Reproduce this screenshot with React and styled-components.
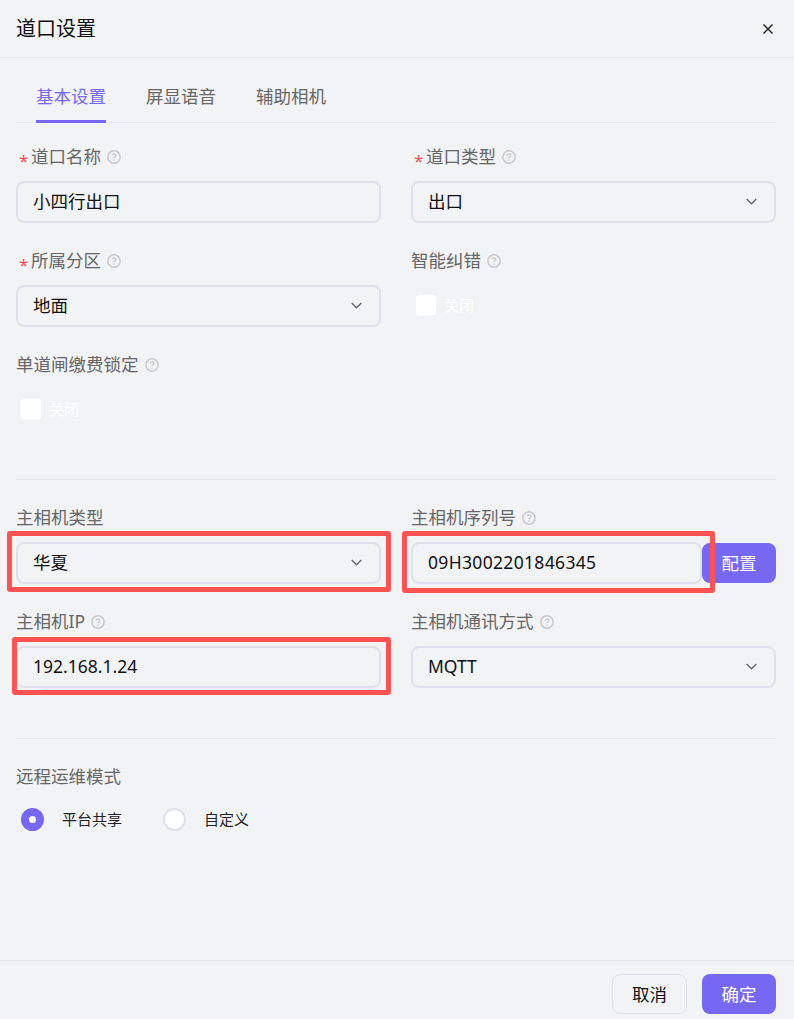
import React from 'react';
import styled, { createGlobalStyle } from 'styled-components';

const FONT = '"Noto Sans", "Noto Sans CJK SC", sans-serif';
const PURPLE = '#7768f3';
const LINE = '#e5e6eb';
const BORDER = '#dfe0e8';

const GlobalStyle = createGlobalStyle`
  html, body {
    margin: 0;
    padding: 0;
    background: #f2f3f5;
  }
  body {
    font-family: ${FONT};
  }
`;

const Dialog = styled.div`
  width: 794px;
  height: 1019px;
  display: flex;
  flex-direction: column;
  background: #f2f3f5;
  overflow: hidden;
`;

const Header = styled.header`
  height: 57px;
  flex: none;
  box-sizing: content-box;
  padding: 0 21px 0 16px;
  display: flex;
  align-items: center;
  justify-content: space-between;
  border-bottom: 1px solid ${LINE};
`;

const Title = styled.h1`
  margin: 0;
  font-size: 20px;
  font-weight: 400;
  line-height: 57px;
  color: #111;
`;

const CloseButton = styled.button`
  width: 10px;
  height: 10px;
  padding: 0;
  border: 0;
  background: none;
  display: flex;
  color: #1a1a1a;
`;

const Body = styled.main`
  flex: 1;
  min-height: 0;
  padding: 0 18px 0 16px;
  display: flex;
  flex-direction: column;
`;

const Tabs = styled.nav`
  height: 64px;
  flex: none;
  margin-bottom: 22px;
  padding-left: 20px;
  display: flex;
  gap: 40px;
  border-bottom: 1px solid ${LINE};
`;

const Tab = styled.div`
  height: 65px;
  box-sizing: border-box;
  padding-top: 25px;
  font-size: 17.5px;
  line-height: 26px;
  color: ${(props) => (props.$active ? PURPLE : '#666')};
  border-bottom: ${(props) => (props.$active ? `3px solid ${PURPLE}` : '0')};
`;

const FormGrid = styled.div`
  display: grid;
  flex: none;
  grid-template-columns: 365px 365px;
  column-gap: 30px;
  grid-auto-rows: 104px;
`;

const Field = styled.div`
  display: flex;
  flex-direction: column;
`;

const Label = styled.div`
  height: 24px;
  flex: none;
  margin-bottom: 12px;
  display: flex;
  align-items: flex-start;
  font-size: 17.5px;
  line-height: 22px;
  color: #666;
`;

const Star = styled.span`
  width: 15px;
  height: 24px;
  box-sizing: border-box;
  padding: 5px 0 0 3px;
  font-size: 17px;
  line-height: 22px;
  color: #ff4d4f;
`;

const HelpWrap = styled.span`
  width: 14px;
  height: 14px;
  margin-left: 6px;
  align-self: center;
  display: flex;
  color: #c9c9c9;
`;

const ControlRow = styled.div`
  display: flex;
`;

const Control = styled.div`
  position: relative;
  width: 100%;
  height: 42px;
  flex: 0 1 auto;
  box-sizing: border-box;
  padding: 0 15px 2px;
  display: flex;
  align-items: center;
  justify-content: space-between;
  border: 2px solid ${BORDER};
  border-radius: 8px;
  font-size: 17.5px;
  line-height: 24px;
  color: #111;
`;

const SerialText = styled.span`
  letter-spacing: 0.33px;
`;

const Chevron = styled.span`
  width: 11px;
  height: 7px;
  margin-right: 2px;
  display: flex;
  color: #666;
`;

const SmallButton = styled.button`
  width: 74px;
  height: 40px;
  margin: 1px 0;
  padding: 0 0 2px;
  flex: none;
  border: 0;
  border-radius: 8px;
  background: ${PURPLE};
  color: #fff;
  font-family: ${FONT};
  font-size: 17.5px;
`;

const Highlight = styled.div`
  position: absolute;
  top: ${(props) => props.$top}px;
  right: ${(props) => props.$right}px;
  bottom: ${(props) => props.$bottom}px;
  left: ${(props) => props.$left}px;
  border: 5px solid #ff5353;
  border-radius: 3px;
  pointer-events: none;
`;

const SwitchRow = styled.div`
  height: 42px;
  box-sizing: border-box;
  padding: 0 0 2px 5px;
  display: flex;
  align-items: center;
  gap: 8px;
`;

const SwitchKnob = styled.span`
  width: 20px;
  height: 20px;
  border-radius: 3px;
  background: #fff;
`;

const SwitchText = styled.span`
  margin-bottom: 2px;
  font-size: 15px;
  color: #fff;
`;

const Divider = styled.hr`
  width: 100%;
  height: 1px;
  flex: none;
  margin: ${(props) => props.$margin};
  border: 0;
  background: ${LINE};
`;

const RadioGroup = styled.div`
  display: flex;
  align-items: center;
  margin-top: 6px;
  padding: 0 0 0 5px;
  height: 24px;
`;

const RadioDot = styled.span`
  width: 23px;
  height: 23px;
  box-sizing: border-box;
  flex: none;
  border-radius: 50%;
  background: #fff;
  border: ${(props) => (props.$checked ? `8px solid ${PURPLE}` : `2px solid ${BORDER}`)};
`;

const RadioText = styled.span`
  margin: 0 41px 0 18px;
  font-size: 15px;
  line-height: 24px;
  color: #222;
`;

const Footer = styled.footer`
  height: 59px;
  box-sizing: border-box;
  flex: none;
  padding: 13px 18px 0 0;
  display: flex;
  justify-content: flex-end;
  gap: 15px;
  border-top: 1px solid ${LINE};
`;

const FooterButton = styled.button`
  width: ${(props) => (props.$primary ? '74px' : '75px')};
  height: 40px;
  padding: 0 0 2px;
  border: ${(props) => (props.$primary ? '0' : `1px solid ${BORDER}`)};
  border-radius: 8px;
  background: ${(props) => (props.$primary ? PURPLE : 'transparent')};
  color: ${(props) => (props.$primary ? '#fff' : '#111')};
  font-family: ${FONT};
  font-size: 17.5px;
`;

const HelpIcon = () => (
  <HelpWrap>
    <svg width="14" height="14" viewBox="0 0 15 15" fill="none" stroke="currentColor">
      <circle cx="7.5" cy="7.5" r="6.6" strokeWidth="1.6" />
      <path d="M5.6 5.9c0-1.1.8-1.8 1.9-1.8s1.9.7 1.9 1.7c0 1.5-1.9 1.5-1.9 3" strokeWidth="1.5" />
      <path d="M7.5 10.2v1.3" strokeWidth="1.5" />
    </svg>
  </HelpWrap>
);

const ChevronIcon = () => (
  <Chevron>
    <svg width="11" height="7" viewBox="0 0 11 7" fill="none" stroke="currentColor" strokeWidth="1.4">
      <path d="M.7 1l4.8 4.8L10.3 1" />
    </svg>
  </Chevron>
);

const FieldLabel = ({ required, help, children }) => (
  <Label>
    {required && <Star>*</Star>}
    {children}
    {help && <HelpIcon />}
  </Label>
);

const App = () => (
  <Dialog>
    <GlobalStyle />
    <Header>
      <Title>道口设置</Title>
      <CloseButton>
        <svg width="10" height="10" viewBox="0 0 10 10" fill="none" stroke="currentColor" strokeWidth="1.4">
          <path d="M.5.5l9 9M9.5.5l-9 9" />
        </svg>
      </CloseButton>
    </Header>
    <Body>
      <Tabs>
        <Tab $active>基本设置</Tab>
        <Tab>屏显语音</Tab>
        <Tab>辅助相机</Tab>
      </Tabs>
      <FormGrid>
        <Field>
          <FieldLabel required help>道口名称</FieldLabel>
          <Control>小四行出口</Control>
        </Field>
        <Field>
          <FieldLabel required help>道口类型</FieldLabel>
          <Control>出口<ChevronIcon /></Control>
        </Field>
        <Field>
          <FieldLabel required help>所属分区</FieldLabel>
          <Control>地面<ChevronIcon /></Control>
        </Field>
        <Field>
          <FieldLabel help>智能纠错</FieldLabel>
          <SwitchRow><SwitchKnob /><SwitchText>关闭</SwitchText></SwitchRow>
        </Field>
        <Field>
          <FieldLabel help>单道闸缴费锁定</FieldLabel>
          <SwitchRow><SwitchKnob /><SwitchText>关闭</SwitchText></SwitchRow>
        </Field>
      </FormGrid>
      <Divider $margin="22px 0 26px" />
      <FormGrid>
        <Field>
          <FieldLabel>主相机类型</FieldLabel>
          <Control>
            华夏<ChevronIcon />
            <Highlight $top={-13} $right={-12} $bottom={-10} $left={-11} />
          </Control>
        </Field>
        <Field>
          <FieldLabel help>主相机序列号</FieldLabel>
          <ControlRow>
            <Control>
              <SerialText>09H3002201846345</SerialText>
              <Highlight $top={-13} $right={-15} $bottom={-11} $left={-11} />
            </Control>
            <SmallButton>配置</SmallButton>
          </ControlRow>
        </Field>
        <Field>
          <FieldLabel help>主相机IP</FieldLabel>
          <Control>
            192.168.1.24
            <Highlight $top={-11} $right={-12} $bottom={-9} $left={-6} />
          </Control>
        </Field>
        <Field>
          <FieldLabel help>主相机通讯方式</FieldLabel>
          <Control>MQTT<ChevronIcon /></Control>
        </Field>
      </FormGrid>
      <Divider $margin="24px 0 26px" />
      <FieldLabel>远程运维模式</FieldLabel>
      <RadioGroup>
        <RadioDot $checked />
        <RadioText>平台共享</RadioText>
        <RadioDot />
        <RadioText>自定义</RadioText>
      </RadioGroup>
    </Body>
    <Footer>
      <FooterButton>取消</FooterButton>
      <FooterButton $primary>确定</FooterButton>
    </Footer>
  </Dialog>
);

export default App;
